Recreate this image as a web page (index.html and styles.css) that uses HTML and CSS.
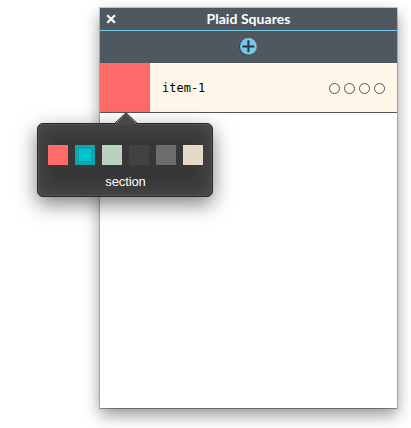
FILE: index.html
```html
<!DOCTYPE html>
<html lang="en">
<head>
<meta charset="utf-8">
<title>Plaid Squares</title>
<link rel="stylesheet" href="styles.css">
</head>
<body>
<main class="window">
  <header class="titlebar">
    <button class="close" aria-label="Close"><svg width="10" height="10" viewBox="0 0 10 10"><path d="M1.3 1.3 8.9 8.7M8.9 1.3 1.3 8.7"/></svg></button>
    <h1 class="title">Plaid Squares</h1>
  </header>
  <div class="toolbar">
    <button class="add" aria-label="Add"><svg width="20" height="20" viewBox="0 0 20 20"><circle class="add-shadow" cx="8.4" cy="10.1" r="8.3"/><circle class="add-disc" cx="9.4" cy="9.4" r="8.4"/><path d="M9.4 3.3V15.3M3.4 9.4H15.4"/></svg></button>
  </div>
  <div class="item">
    <div class="item-color"></div>
    <span class="item-name">item-1</span>
    <div class="dots"><i class="dot"></i><i class="dot"></i><i class="dot"></i><i class="dot"></i></div>
  </div>
</main>
<aside class="popover">
  <svg class="arrow" width="26" height="13" viewBox="0 0 26 13"><path class="arrow-fill" d="M1 13 13 1 25 13Z"/><path class="arrow-edge" d="M1.5 11.5 13 .8 24.5 11.5"/><path class="arrow-light" d="M2.5 12.5 13 2.3 23.5 12.5"/></svg>
  <div class="swatches">
    <span class="swatch coral"></span>
    <span class="swatch teal"></span>
    <span class="swatch mint"></span>
    <span class="swatch charcoal"></span>
    <span class="swatch gray"></span>
    <span class="swatch sand"></span>
  </div>
  <div class="label">section</div>
</aside>
</body>
</html>
```
FILE: styles.css
```css
* { box-sizing: border-box; }
body {
  margin: 0;
  height: 428px;
  padding: 8px 14px 20px 100px;
  background: #fff;
  overflow: hidden;
}
button { padding: 0; border: 0; background: none; }
svg { display: block; }
.window {
  width: 297px;
  height: 400px;
  background: #fff;
  box-shadow: 0 0 0 1px rgba(0, 0, 0, .2), 0 1px 0 rgba(0, 0, 0, .2), 0 7px 15px rgba(0, 0, 0, .42);
}
.titlebar {
  display: grid;
  grid-template-columns: 22px 1fr 22px;
  align-items: center;
  height: 23px;
  background: #50585f;
  border-bottom: 1px solid #76c7ec;
}
.close { padding-left: 6px; }
.close path { stroke: #fff; stroke-width: 2.3; fill: none; }
.title {
  margin: 0;
  color: #fff;
  font: 700 14px/22px Lato, "Open Sans", sans-serif;
  letter-spacing: .05px;
  text-align: center;
  white-space: nowrap;
}
.toolbar {
  display: flex;
  justify-content: center;
  height: 32px;
  padding-top: 6px;
  background: #50585f;
}
.add { height: 20px; }
.add-shadow { fill: #343b41; }
.add-disc { fill: #76c7ec; }
.add path { stroke: #2d353c; stroke-width: 2; fill: none; }
.item {
  display: flex;
  align-items: center;
  height: 50px;
  background: #fff6e9;
  border-bottom: 1px solid #50585f;
}
.item-color { width: 50px; height: 49px; background: #ff6b69; }
.item-name {
  margin-left: 12px;
  color: #000;
  font: 12px/16px "DejaVu Sans Mono", monospace;
}
.dots { display: flex; gap: 4px; margin: 1px 12px 0 auto; }
.dot { width: 11px; height: 11px; border: 1px solid #50585f; border-radius: 50%; }
.popover {
  position: absolute;
  left: 37px;
  top: 123px;
  width: 176px;
  height: 74px;
  padding: 21px 9px 0 10px;
  border: 1px solid #282828;
  border-radius: 6px;
  background: #373737;
  box-shadow: inset 0 0 0 1px rgba(255, 255, 255, .07), inset 0 0 22px rgba(255, 255, 255, .14), 0 7px 20px rgba(0, 0, 0, .5);
}
.arrow { position: absolute; left: 75px; top: -12px; }
.arrow-fill { fill: #484848; }
.arrow-edge { fill: none; stroke: #282828; }
.arrow-light { fill: none; stroke: #575757; }
.swatches { display: flex; gap: 7px; }
.swatch { width: 20px; height: 20px; }
.coral { background: #ff6b69; }
.teal { background: #00c3cb; border: 4px solid #10a5ac; }
.mint { background: #b9d2c0; }
.charcoal { background: #424242; }
.gray { background: #6d6d6d; }
.sand { background: #e6d9c6; }
.label {
  margin-top: 8px;
  color: #fff;
  font: 13px/18px "Liberation Sans", Arial, sans-serif;
  letter-spacing: -.1px;
  text-align: center;
}
```
